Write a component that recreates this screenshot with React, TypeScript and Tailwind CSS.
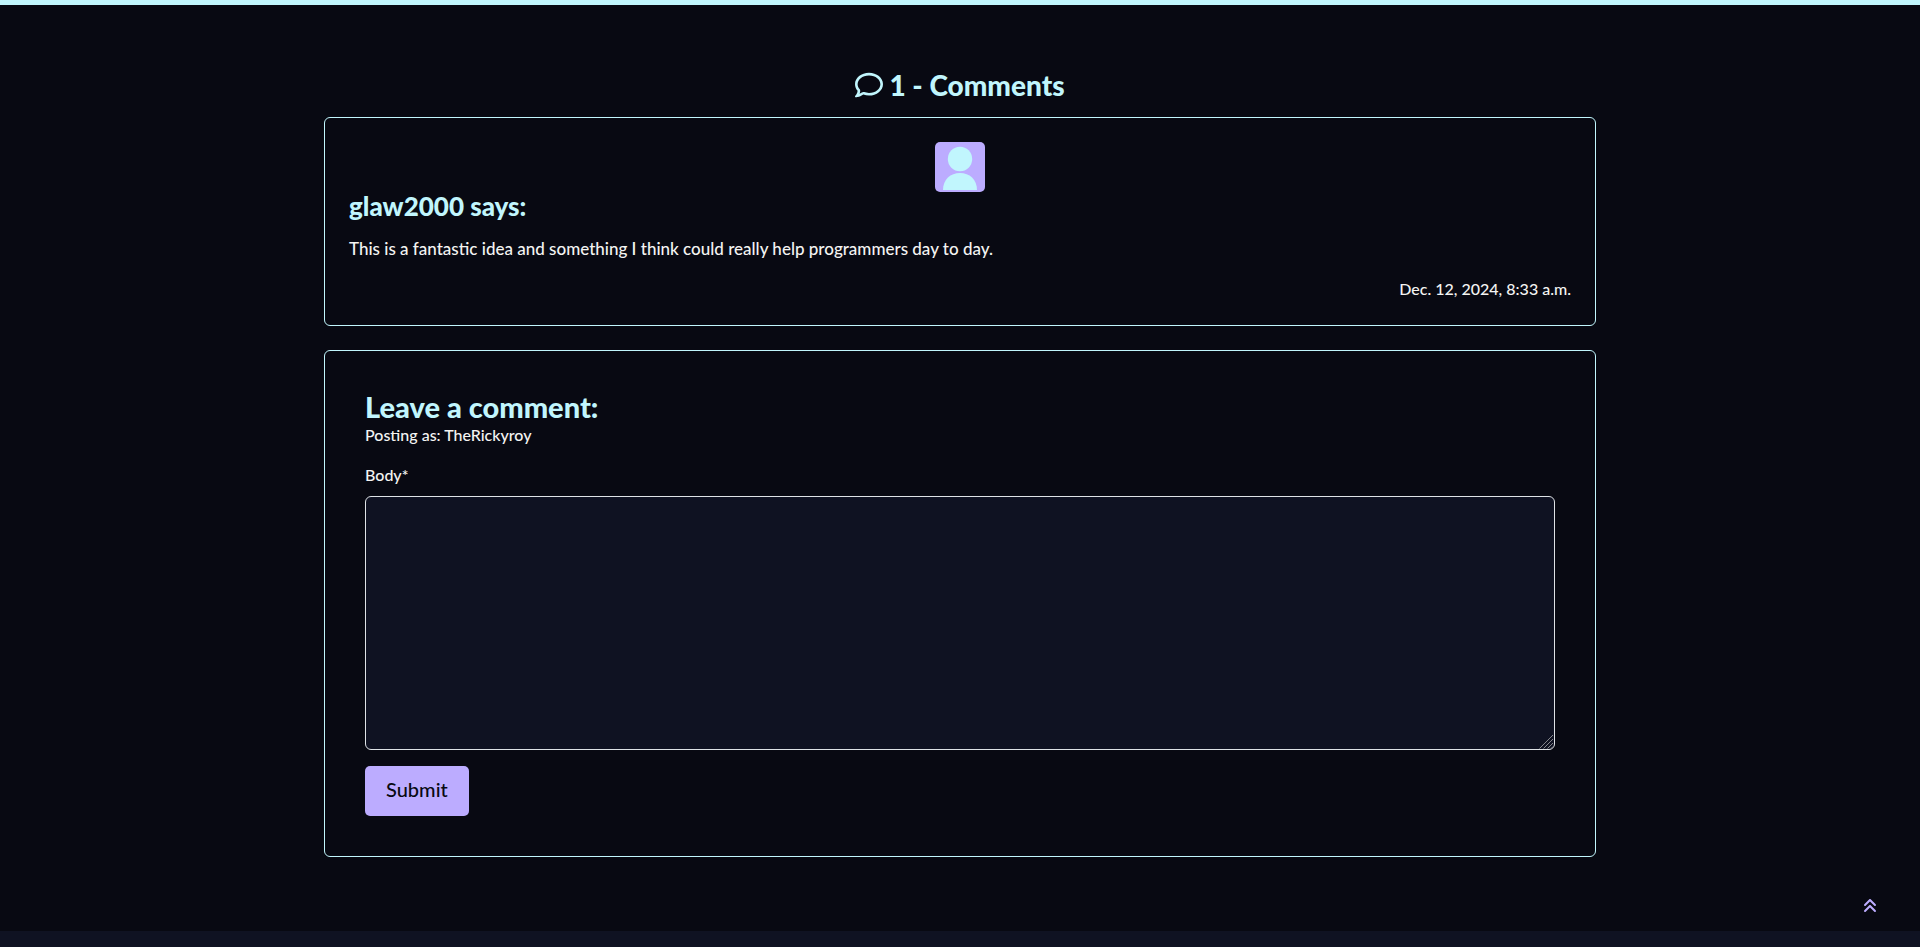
import { FaAnglesUp, FaRegComment } from "react-icons/fa6";

const headingFont = "font-['Lato','Open_Sans',sans-serif] font-black text-[#c1f6fd]";

function Avatar() {
  return (
    <svg
      className="mx-auto block size-[50px] rounded-[5px] bg-[#bcacff]"
      viewBox="0 0 50 50"
      role="img"
      aria-label="User avatar"
    >
      <circle cx="25" cy="17" r="12.2" fill="#c1f6fd" />
      <path d="M8 48C8 37.500 15.500 31 25 31s17 6.500 17 17z" fill="#c1f6fd" />
    </svg>
  );
}

function Comment() {
  return (
    <article className="rounded-md border border-[#c1f6fd] p-6">
      <Avatar />
      <h3 className={`${headingFont} text-[26px] leading-[29px]`}>glaw2000 says:</h3>
      <p className="mt-4 text-[17px] leading-6">
        This is a fantastic idea and something I think could really help programmers day to day.
      </p>
      <p className="mt-4 text-right leading-6">Dec. 12, 2024, 8:33 a.m.</p>
    </article>
  );
}

function ResizeGrip() {
  return (
    <svg
      className="pointer-events-none absolute right-px bottom-px size-[15px]"
      viewBox="0 0 15 15"
      stroke="#85868c"
      strokeWidth="1"
      aria-hidden="true"
    >
      <path d="M0.500 14.500L14 1M4.500 14.500L14 5M8.500 14.500L14 9M12 14.500L14 12.500" />
    </svg>
  );
}

function CommentForm() {
  return (
    <section className="mt-6 rounded-md border border-[#c1f6fd] p-10">
      <h3 className={`${headingFont} text-[29px] leading-8`}>Leave a comment:</h3>
      <p className="mb-4 leading-6">Posting as: TheRickyroy</p>
      <form onSubmit={(event) => event.preventDefault()}>
        <label htmlFor="body" className="mb-[9px] block leading-6">
          Body*
        </label>
        <div className="relative">
          <textarea
            id="body"
            name="body"
            required
            rows={10}
            className="block w-full resize-y rounded-md border border-[#dee2e6] bg-[#0f1222] px-3 py-1.5 leading-6 [&::-webkit-resizer]:bg-transparent"
          />
          <ResizeGrip />
        </div>
        <button
          type="submit"
          className="mt-4 block h-[50px] rounded-[5px] bg-[#bcacff] px-[21px] pb-1 text-xl text-[#080912]"
        >
          Submit
        </button>
      </form>
    </section>
  );
}

export default function App() {
  return (
    <div className="flex min-h-screen flex-col border-t-[5px] border-[#c1f6fd] bg-[#080912] font-['Lato','Open_Sans',sans-serif] text-base font-medium text-[#f4f4f2]">
      <main className="mx-auto w-full max-w-[1320px] grow px-6 pt-[60px]">
        <h2 className={`${headingFont} mb-3 flex items-center justify-center gap-1.5 text-[28px] leading-10`}>
          <FaRegComment className="size-7" aria-hidden="true" />
          <span>1 - Comments</span>
        </h2>
        <Comment />
        <CommentForm />
      </main>
      <footer className="h-4 bg-[#0f1222]" />
      <a href="#top" aria-label="Back to top" className="fixed right-[42px] bottom-[33px] text-[#bcacff]">
        <FaAnglesUp className="size-4" />
      </a>
    </div>
  );
}
